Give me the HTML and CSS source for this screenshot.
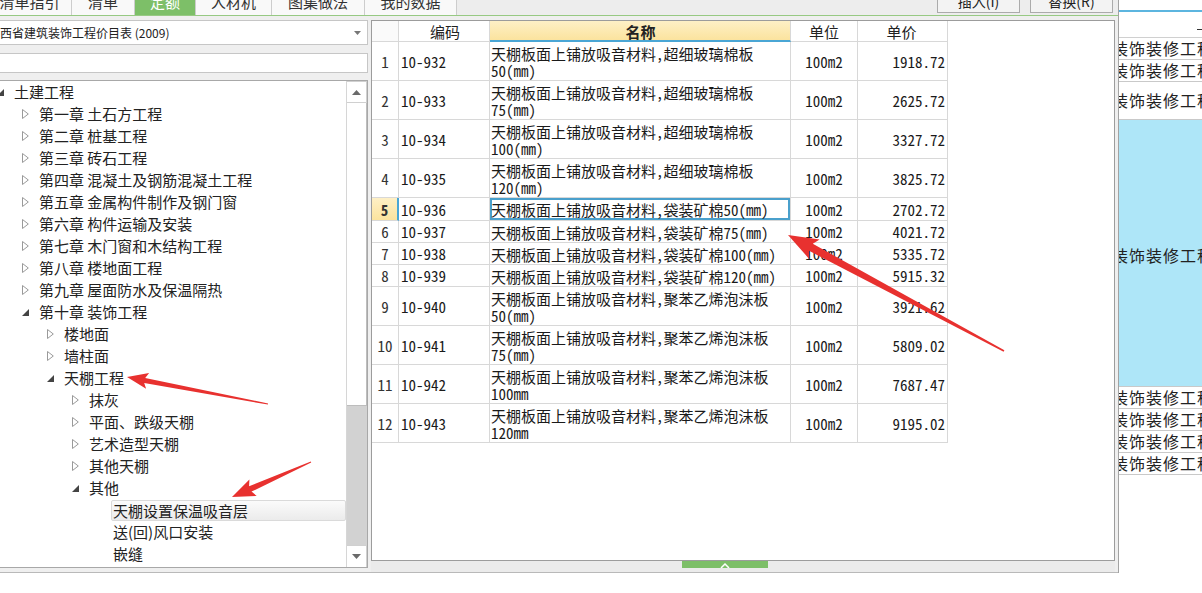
FILE: index.html
```html
<!DOCTYPE html>
<html lang="zh-CN">
<head>
<meta charset="utf-8">
<title>定额</title>
<link rel="stylesheet" href="styles.css">
</head>
<body>
<div class="app">
  <div class="main">
    <div class="tabbar">
      <div class="tab t1"><span>清单指引</span></div>
      <div class="tab t2"><span>清单</span></div>
      <div class="tab t3 active"><span>定额</span></div>
      <div class="tab t4"><span>人材机</span></div>
      <div class="tab t5"><span>图集做法</span></div>
      <div class="tab t6"><span>我的数据</span></div>
      <div class="spacer"></div>
      <div class="btn b1"><span>插入(I)</span></div>
      <div class="btn b2"><span>替换(R)</span></div>
    </div>
    <div class="content">
      <div class="left">
        <div class="dropdown">
          <span class="dd-text">广西省建筑装饰工程价目表 (2009)</span>
          <svg class="dd-arrow" width="7" height="4" viewBox="0 0 7 4"><path d="M0 0H7L3.5 4Z" fill="#777"/></svg>
        </div>
        <div class="search"></div>
        <div class="tree">
          <div class="tree-list">
            <div class="node l0"><span class="ic"><svg width="7" height="7" viewBox="0 0 7 7"><path d="M7 0V7H0Z" fill="#444"/></svg></span><span class="label">土建工程</span></div>
            <div class="node l1"><span class="ic"><svg width="7" height="10" viewBox="0 0 7 10"><path d="M0.5 0.5L6.3 5L0.5 9.5Z" fill="none" stroke="#9a9a9a"/></svg></span><span class="label">第一章 土石方工程</span></div>
            <div class="node l1"><span class="ic"><svg width="7" height="10" viewBox="0 0 7 10"><path d="M0.5 0.5L6.3 5L0.5 9.5Z" fill="none" stroke="#9a9a9a"/></svg></span><span class="label">第二章 桩基工程</span></div>
            <div class="node l1"><span class="ic"><svg width="7" height="10" viewBox="0 0 7 10"><path d="M0.5 0.5L6.3 5L0.5 9.5Z" fill="none" stroke="#9a9a9a"/></svg></span><span class="label">第三章 砖石工程</span></div>
            <div class="node l1"><span class="ic"><svg width="7" height="10" viewBox="0 0 7 10"><path d="M0.5 0.5L6.3 5L0.5 9.5Z" fill="none" stroke="#9a9a9a"/></svg></span><span class="label">第四章 混凝土及钢筋混凝土工程</span></div>
            <div class="node l1"><span class="ic"><svg width="7" height="10" viewBox="0 0 7 10"><path d="M0.5 0.5L6.3 5L0.5 9.5Z" fill="none" stroke="#9a9a9a"/></svg></span><span class="label">第五章 金属构件制作及钢门窗</span></div>
            <div class="node l1"><span class="ic"><svg width="7" height="10" viewBox="0 0 7 10"><path d="M0.5 0.5L6.3 5L0.5 9.5Z" fill="none" stroke="#9a9a9a"/></svg></span><span class="label">第六章 构件运输及安装</span></div>
            <div class="node l1"><span class="ic"><svg width="7" height="10" viewBox="0 0 7 10"><path d="M0.5 0.5L6.3 5L0.5 9.5Z" fill="none" stroke="#9a9a9a"/></svg></span><span class="label">第七章 木门窗和木结构工程</span></div>
            <div class="node l1"><span class="ic"><svg width="7" height="10" viewBox="0 0 7 10"><path d="M0.5 0.5L6.3 5L0.5 9.5Z" fill="none" stroke="#9a9a9a"/></svg></span><span class="label">第八章 楼地面工程</span></div>
            <div class="node l1"><span class="ic"><svg width="7" height="10" viewBox="0 0 7 10"><path d="M0.5 0.5L6.3 5L0.5 9.5Z" fill="none" stroke="#9a9a9a"/></svg></span><span class="label">第九章 屋面防水及保温隔热</span></div>
            <div class="node l1"><span class="ic"><svg width="7" height="7" viewBox="0 0 7 7"><path d="M7 0V7H0Z" fill="#444"/></svg></span><span class="label">第十章 装饰工程</span></div>
            <div class="node l2"><span class="ic"><svg width="7" height="10" viewBox="0 0 7 10"><path d="M0.5 0.5L6.3 5L0.5 9.5Z" fill="none" stroke="#9a9a9a"/></svg></span><span class="label">楼地面</span></div>
            <div class="node l2"><span class="ic"><svg width="7" height="10" viewBox="0 0 7 10"><path d="M0.5 0.5L6.3 5L0.5 9.5Z" fill="none" stroke="#9a9a9a"/></svg></span><span class="label">墙柱面</span></div>
            <div class="node l2"><span class="ic"><svg width="7" height="7" viewBox="0 0 7 7"><path d="M7 0V7H0Z" fill="#444"/></svg></span><span class="label">天棚工程</span></div>
            <div class="node l3"><span class="ic"><svg width="7" height="10" viewBox="0 0 7 10"><path d="M0.5 0.5L6.3 5L0.5 9.5Z" fill="none" stroke="#9a9a9a"/></svg></span><span class="label">抹灰</span></div>
            <div class="node l3"><span class="ic"><svg width="7" height="10" viewBox="0 0 7 10"><path d="M0.5 0.5L6.3 5L0.5 9.5Z" fill="none" stroke="#9a9a9a"/></svg></span><span class="label">平面、跌级天棚</span></div>
            <div class="node l3"><span class="ic"><svg width="7" height="10" viewBox="0 0 7 10"><path d="M0.5 0.5L6.3 5L0.5 9.5Z" fill="none" stroke="#9a9a9a"/></svg></span><span class="label">艺术造型天棚</span></div>
            <div class="node l3"><span class="ic"><svg width="7" height="10" viewBox="0 0 7 10"><path d="M0.5 0.5L6.3 5L0.5 9.5Z" fill="none" stroke="#9a9a9a"/></svg></span><span class="label">其他天棚</span></div>
            <div class="node l3"><span class="ic"><svg width="7" height="7" viewBox="0 0 7 7"><path d="M7 0V7H0Z" fill="#444"/></svg></span><span class="label">其他</span></div>
            <div class="node l4 selected"><span class="ic"></span><span class="label">天棚设置保温吸音层</span></div>
            <div class="node l4"><span class="ic"></span><span class="label">送(回)风口安装</span></div>
            <div class="node l4"><span class="ic"></span><span class="label">嵌缝</span></div>
          </div>
          <div class="scrollbar">
            <div class="sb-btn sb-up"><svg width="9" height="5" viewBox="0 0 9 5"><path d="M0 5H9L4.5 0Z" fill="#6a6a6a"/></svg></div>
            <div class="sb-thumb"></div>
            <div class="sb-track"></div>
            <div class="sb-btn sb-down"><svg width="9" height="5" viewBox="0 0 9 5"><path d="M0 0H9L4.5 5Z" fill="#6a6a6a"/></svg></div>
          </div>
        </div>
      </div>
      <div class="center">
        <div class="grid">
          <div class="row head">
            <div class="c rn"></div>
            <div class="c code">编码</div>
            <div class="c name">名称</div>
            <div class="c unit">单位</div>
            <div class="c price">单价</div>
          </div>
          <div class="row h2">
            <div class="c rn">1</div><div class="c code">10-932</div>
            <div class="c name">天棚板面上铺放吸音材料,超细玻璃棉板<br>50(mm)</div>
            <div class="c unit">100m2</div><div class="c price">1918.72</div>
          </div>
          <div class="row h2">
            <div class="c rn">2</div><div class="c code">10-933</div>
            <div class="c name">天棚板面上铺放吸音材料,超细玻璃棉板<br>75(mm)</div>
            <div class="c unit">100m2</div><div class="c price">2625.72</div>
          </div>
          <div class="row h2">
            <div class="c rn">3</div><div class="c code">10-934</div>
            <div class="c name">天棚板面上铺放吸音材料,超细玻璃棉板<br>100(mm)</div>
            <div class="c unit">100m2</div><div class="c price">3327.72</div>
          </div>
          <div class="row h2">
            <div class="c rn">4</div><div class="c code">10-935</div>
            <div class="c name">天棚板面上铺放吸音材料,超细玻璃棉板<br>120(mm)</div>
            <div class="c unit">100m2</div><div class="c price">3825.72</div>
          </div>
          <div class="row h1 current">
            <div class="c rn">5</div><div class="c code">10-936</div>
            <div class="c name">天棚板面上铺放吸音材料,袋装矿棉50(mm)</div>
            <div class="c unit">100m2</div><div class="c price">2702.72</div>
          </div>
          <div class="row h1">
            <div class="c rn">6</div><div class="c code">10-937</div>
            <div class="c name">天棚板面上铺放吸音材料,袋装矿棉75(mm)</div>
            <div class="c unit">100m2</div><div class="c price">4021.72</div>
          </div>
          <div class="row h1">
            <div class="c rn">7</div><div class="c code">10-938</div>
            <div class="c name">天棚板面上铺放吸音材料,袋装矿棉100(mm)</div>
            <div class="c unit">100m2</div><div class="c price">5335.72</div>
          </div>
          <div class="row h1">
            <div class="c rn">8</div><div class="c code">10-939</div>
            <div class="c name">天棚板面上铺放吸音材料,袋装矿棉120(mm)</div>
            <div class="c unit">100m2</div><div class="c price">5915.32</div>
          </div>
          <div class="row h2">
            <div class="c rn">9</div><div class="c code">10-940</div>
            <div class="c name">天棚板面上铺放吸音材料,聚苯乙烯泡沫板<br>50(mm)</div>
            <div class="c unit">100m2</div><div class="c price">3921.62</div>
          </div>
          <div class="row h2">
            <div class="c rn">10</div><div class="c code">10-941</div>
            <div class="c name">天棚板面上铺放吸音材料,聚苯乙烯泡沫板<br>75(mm)</div>
            <div class="c unit">100m2</div><div class="c price">5809.02</div>
          </div>
          <div class="row h2">
            <div class="c rn">11</div><div class="c code">10-942</div>
            <div class="c name">天棚板面上铺放吸音材料,聚苯乙烯泡沫板<br>100mm</div>
            <div class="c unit">100m2</div><div class="c price">7687.47</div>
          </div>
          <div class="row h2">
            <div class="c rn">12</div><div class="c code">10-943</div>
            <div class="c name">天棚板面上铺放吸音材料,聚苯乙烯泡沫板<br>120mm</div>
            <div class="c unit">100m2</div><div class="c price">9195.02</div>
          </div>
        </div>
        <div class="splitter">
          <div class="grip"><svg width="10" height="5" viewBox="0 0 10 5"><path d="M1 5L5 1L9 5" fill="none" stroke="#fff" stroke-width="1.5"/></svg></div>
        </div>
      </div>
    </div>
  </div>
  <div class="right">
    <div class="r-top"></div>
    <div class="r-line"></div>
    <div class="r-head"><span class="r-dash"></span></div>
    <div class="r-row">装饰装修工程</div>
    <div class="r-row">装饰装修工程</div>
    <div class="r-row tall">装饰装修工程</div>
    <div class="r-row sel">装饰装修工程</div>
    <div class="r-row">装饰装修工程</div>
    <div class="r-row">装饰装修工程</div>
    <div class="r-row">装饰装修工程</div>
    <div class="r-row">装饰装修工程</div>
  </div>
</div>
<svg class="annot" width="1202" height="593" viewBox="0 0 1202 593">
  <polygon fill="#e8312f" points="127,377 149.1,373.1 145.2,377.9 268.1,403.4 267.9,404.6 144.2,382.9 146.1,388.8"/>
  <polygon fill="#e8312f" points="232,497 249.4,479.5 249.1,486.2 310.8,461.5 311.2,462.6 251.5,491.6 256.7,495.9"/>
  <polygon fill="#e8312f" points="788,235 819.6,239.5 812.8,243.8 1004.4,350.3 1003.6,351.7 809.0,250.8 809.2,258.9"/>
</svg>
</body>
</html>
```

FILE: styles.css
```css
* { box-sizing: border-box; }
body {
  margin: 0;
  width: 1202px;
  height: 593px;
  overflow: hidden;
  background: #fff;
  font-family: "Noto Sans CJK SC", "Noto Sans", sans-serif;
  color: #222;
  position: relative;
}
.app { display: flex; height: 593px; }
.main { width: 1118px; display: flex; flex-direction: column; }

/* tab bar */
.tabbar {
  height: 16px;
  display: flex;
  align-items: flex-start;
  background: #ededed;
  border-bottom: 1px solid #97c983;
}
.tab {
  height: 15px;
  overflow: hidden;
  background: #f9f9f9;
  border-right: 1px solid #cdcdcd;
  font-size: 15px;
  color: #333;
  text-align: center;
}
.tab span { display: block; line-height: 20px; margin-top: -8px; }
.tab.active { background: #7dbf68; color: #fff; }
.t1 { margin-left: -12px; width: 84px; }
.t2 { width: 63px; }
.t3 { width: 61px; }
.t4 { width: 76px; }
.t5 { width: 93px; }
.t6 { width: 92px; }
.spacer { flex: 1; }
.btn {
  width: 83px;
  height: 13px;
  overflow: hidden;
  border: 1px solid #ababab;
  border-top: none;
  background: #f3f3f3;
  font-size: 14px;
  color: #222;
  text-align: center;
}
.btn span { display: block; line-height: 18px; margin-top: -8px; }
.b1 { margin-right: 10px; }
.b2 { margin-right: 5px; }

/* content */
.content {
  height: 557px;
  display: flex;
  gap: 3px;
  padding-top: 4px;
  background: #efefef;
  border-bottom: 1px solid #b9b9b9;
}
.left {
  margin-left: -16px;
  width: 384px;
  display: flex;
  flex-direction: column;
}
.dropdown {
  height: 25px;
  background: #fff;
  border: 1px solid #c6c6c6;
  display: flex;
  align-items: center;
  padding-left: 3px;
  padding-right: 6px;
}
.dd-text { flex: 1; font-size: 12px; color: #222; white-space: nowrap; }
.dd-arrow { display: block; }
.search {
  margin-top: 8px;
  height: 20px;
  background: #fff;
  border: 1px solid #c6c6c6;
}
.tree {
  margin-top: 7px;
  height: 488px;
  background: #fff;
  border: 1px solid #a8a8a8;
  display: flex;
  overflow: hidden;
}
.tree-list { flex: 1; display: flex; flex-direction: column; }
.node {
  height: 22px;
  display: flex;
  align-items: center;
  font-size: 15px;
  color: #222;
  white-space: nowrap;
  flex: none;
}
.node .ic { width: 17px; flex: none; display: flex; align-items: center; }
.node .ic svg { display: block; }
.node .label { line-height: 22px; }
.l0 { padding-left: 12px; }
.l1 { padding-left: 37px; }
.l2 { padding-left: 62px; }
.l3 { padding-left: 87px; }
.l4 { padding-left: 111px; }
.node.selected .label {
  flex: 1;
  margin-left: -2px;
  padding-left: 1px;
  height: 21px;
  line-height: 19px;
  border: 1px solid #dadada;
  border-radius: 2px;
  background: linear-gradient(#fbfbfb, #ebebeb);
}

.scrollbar {
  width: 21px;
  flex: none;
  display: flex;
  flex-direction: column;
  border-left: 1px solid #d6d6d6;
}
.sb-btn {
  height: 22px;
  display: flex;
  align-items: center;
  justify-content: center;
  background: #fff;
  border: 1px solid #d0d0d0;
  border-left: none;
}
.sb-down { border-bottom: none; }
.sb-thumb {
  height: 303px;
  background: #fff;
  border-right: 1px solid #bdbdbd;
  border-bottom: 1px solid #bdbdbd;
}
.sb-track { flex: 1; background: #d2d2d2; }

/* center grid */
.center { width: 744px; display: flex; flex-direction: column; }
.grid {
  height: 541px;
  background: #fff;
  border: 1px solid #9c9c9c;
  overflow: hidden;
  font-family: "Noto Sans Mono CJK SC", "Noto Sans CJK SC", monospace;
  font-size: 15px;
  color: #1a1a1a;
}
.row {
  display: grid;
  grid-template-columns: 27px 91px 301px 67px 90px;
  width: 576px;
}
.row.head { height: 21px; }
.row.h2 { height: 39px; }
.row.h1 { height: 22px; }
.row.current { height: 23px; }
.c {
  border-right: 1px solid #d8d8d8;
  border-bottom: 1px solid #d8d8d8;
  display: flex;
  align-items: center;
  white-space: nowrap;
  line-height: 17px;
}
.head .c { justify-content: center; background: #fff; color: #222; }
.head .rn { background: #fafafa; }
.head .name {
  background: linear-gradient(#fef0c6, #fbe39e);
  font-weight: bold;
  border-bottom: 2px solid #4aa6d5;
}
.rn { justify-content: center; color: #333; }
.code { padding-left: 2px; }
.name { padding-left: 1px; padding-top: 1px; }
.unit { justify-content: center; }
.price { justify-content: flex-end; padding-right: 2px; }
.current .rn {
  background: linear-gradient(#fef0c6, #fbe39e);
  font-weight: bold;
  border-right: 2px solid #4aa6d5;
}
.current .name { box-shadow: inset 0 0 0 2px #4aa0cc; }

.splitter {
  height: 11px;
  padding-left: 311px;
  background: #ebebeb;
}
.grip {
  width: 86px;
  height: 7px;
  background: #7dbf68;
  display: flex;
  justify-content: center;
  align-items: flex-end;
}
.grip svg { display: block; }

/* right panel */
.right {
  width: 84px;
  height: 573px;
  border-left: 1px solid #a3a3a3;
  background: #fff;
  overflow: hidden;
  font-family: "Noto Sans Mono CJK SC", "Noto Sans CJK SC", monospace;
  font-size: 16px;
  color: #222;
}
.r-top { height: 10px; }
.r-line { height: 2px; background: #5cb5df; }
.r-head {
  height: 26px;
  border-bottom: 1px solid #d0d0d0;
  display: flex;
  justify-content: flex-end;
  align-items: center;
}
.r-dash { width: 5px; height: 1px; background: #333; margin-top: 9px; }
.r-row {
  height: 22px;
  border-bottom: 1px solid #c9c9c9;
  white-space: nowrap;
  text-indent: -7px;
  letter-spacing: 1px;
  line-height: 21px;
}
.r-row.tall { height: 38px; line-height: 37px; }
.r-row.sel {
  height: 267px;
  line-height: 270px;
  background: #aee6f8;
  border-bottom: 1px solid #c9c9c9;
}

/* annotation arrows overlay */
.annot { position: absolute; left: 0; top: 0; pointer-events: none; }
```
